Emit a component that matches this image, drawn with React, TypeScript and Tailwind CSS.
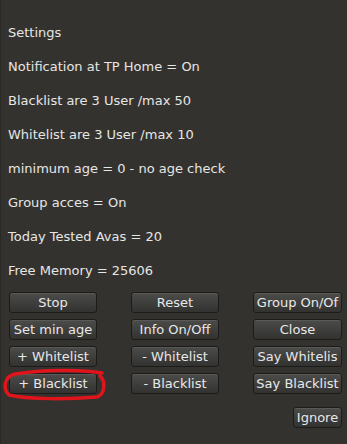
import React from 'react';

const lines = [
  'Settings',
  'Notification at TP Home = On',
  'Blacklist are 3 User /max 50',
  'Whitelist are 3 User /max 10',
  'minimum age = 0 - no age check',
  'Group acces = On',
  'Today Tested Avas = 20',
  'Free Memory = 25606',
];

const buttons = [
  'Stop', 'Reset', 'Group On/Of',
  'Set min age', 'Info On/Off', 'Close',
  '+ Whitelist', '- Whitelist', 'Say Whitelis',
  '+ Blacklist', '- Blacklist', 'Say Blacklist',
];

const DialogButton: React.FC<{ label: string; className?: string }> = ({ label, className = '' }) => (
  <button
    className={`flex h-[21px] items-center justify-center whitespace-nowrap rounded-[3px] border border-[#1c1c1b] bg-gradient-to-b from-[#4c4c4b] to-[#323231] text-[13px] leading-none text-[#e8e8e8] shadow-[inset_0_1px_0_rgba(255,255,255,0.08)] ${className}`}
  >
    {label}
  </button>
);

const App: React.FC = () => {
  return (
    <main
      className="relative h-[444px] w-[347px] overflow-hidden border-l border-[#2a2926] bg-[#34322e] text-[#e6e6e6]"
      style={{ fontFamily: '"DejaVu Sans", "Liberation Sans", sans-serif' }}
    >
      <div className="pt-[16px] pl-[7px]">
        {lines.map((line) => (
          <p key={line} className="flex h-[34px] items-center text-[13px]">
            {line}
          </p>
        ))}
      </div>

      <div className="mt-[4px] grid grid-cols-[88px_88px_89px] gap-x-[34px] gap-y-[6px] pl-[8px]">
        {buttons.map((label) => (
          <DialogButton key={label} label={label} />
        ))}
      </div>

      <div className="mt-[13px] flex justify-end pr-[5px]">
        <DialogButton label="Ignore" className="w-[49px]" />
      </div>

      {/* hand drawn red mark round + Blacklist */}
      <svg className="pointer-events-none absolute left-0 top-[364px]" width="110" height="40" viewBox="0 0 110 40">
        <path
          d="M101 9 C80 5, 40 6, 14 10 C4 12, 1 24, 8 31 C30 36, 70 35, 96 33 C104 30, 105 18, 99 12"
          fill="none"
          stroke="#e0141b"
          strokeWidth="3.5"
          strokeLinecap="round"
        />
      </svg>
    </main>
  );
};

export default App;
